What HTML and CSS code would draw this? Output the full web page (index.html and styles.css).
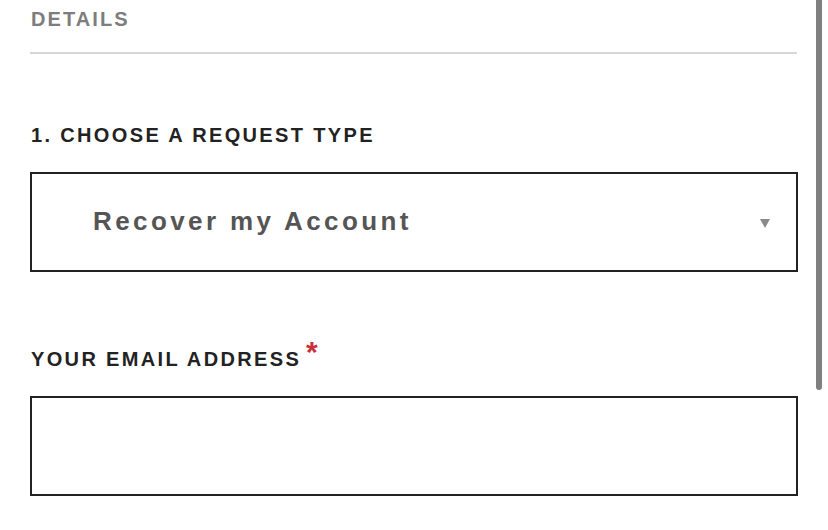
FILE: index.html
```html
<!DOCTYPE html>
<html lang="en">
<head>
<meta charset="utf-8">
<title>Details</title>
<link rel="stylesheet" href="styles.css">
</head>
<body>
  <main class="form">
    <h2 class="section-title">DETAILS</h2>
    <hr class="divider">
    <div class="field field-first">
      <label class="field-label">1. CHOOSE A REQUEST TYPE</label>
      <div class="select-box">
        <span class="select-value">Recover my Account</span>
        <span class="select-arrow"></span>
      </div>
    </div>
    <div class="field field-second">
      <label class="field-label">YOUR EMAIL ADDRESS<span class="required">*</span></label>
      <div class="text-box"></div>
    </div>
  </main>
  <div class="scroll-thumb"></div>
</body>
</html>
```

FILE: styles.css
```css
* { box-sizing: border-box; }

html, body {
  margin: 0;
  padding: 0;
  background: #ffffff;
}

body {
  font-family: "Liberation Sans", Arial, Helvetica, sans-serif;
  color: #222222;
  overflow: hidden;
}

.form {
  padding: 7px 30px 0 30px;
  display: flex;
  flex-direction: column;
}

.section-title {
  margin: 0;
  font-size: 20px;
  line-height: 24px;
  font-weight: bold;
  letter-spacing: 2.1px;
  color: #7d7d7d;
  padding-left: 1px;
}

.divider {
  margin: 21px 0 0 0;
  border: 0;
  height: 2px;
  background: #d6d6d6;
  width: 767px;
}

.field {
  display: flex;
  flex-direction: column;
}

.field-first { margin-top: 69px; }
.field-second { margin-top: 75px; }

.field-label {
  font-size: 20px;
  line-height: 24px;
  font-weight: bold;
  letter-spacing: 2.35px;
  color: #222222;
  padding-left: 1px;
}

.required {
  color: #c8303a;
  font-size: 30px;
  line-height: 0;
  vertical-align: 4px;
  margin-left: 5px;
  letter-spacing: 0;
}

.select-box {
  margin-top: 25px;
  height: 100px;
  border: 2px solid #222222;
  display: flex;
  align-items: center;
  justify-content: space-between;
  padding: 0 26px 2px 61px;
}

.select-value {
  font-size: 26px;
  font-weight: bold;
  letter-spacing: 3.4px;
  color: #555555;
}

.select-arrow {
  width: 0;
  height: 0;
  border-left: 5px solid transparent;
  border-right: 5px solid transparent;
  border-top: 9px solid #8a8a8a;
  margin-top: 4px;
}

.text-box {
  margin-top: 25px;
  height: 100px;
  border: 2px solid #222222;
}

.scroll-thumb {
  position: fixed;
  top: 0;
  right: 6px;
  width: 6px;
  height: 390px;
  background: #808080;
  border-radius: 0 0 3px 3px;
}
```
